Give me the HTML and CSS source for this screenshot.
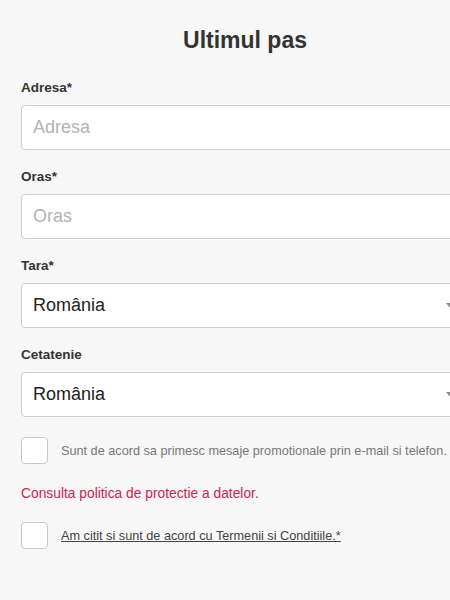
FILE: index.html
```html
<!DOCTYPE html>
<html lang="ro">
<head>
<meta charset="utf-8">
<title>Ultimul pas</title>
<link rel="stylesheet" href="styles.css">
</head>
<body>
<div class="page">
  <form class="form">
    <h1 class="title">Ultimul pas</h1>
    <div class="field">
      <label class="label">Adresa*</label>
      <div class="input"><span class="placeholder">Adresa</span></div>
    </div>
    <div class="field">
      <label class="label">Oras*</label>
      <div class="input"><span class="placeholder">Oras</span></div>
    </div>
    <div class="field">
      <label class="label">Tara*</label>
      <div class="input select"><span class="value">România</span><span class="arrow"></span></div>
    </div>
    <div class="field">
      <label class="label">Cetatenie</label>
      <div class="input select"><span class="value">România</span><span class="arrow"></span></div>
    </div>
    <div class="check-row first">
      <span class="checkbox"></span>
      <span class="check-text">Sunt de acord sa primesc mesaje promotionale prin e-mail si telefon.</span>
    </div>
    <a class="policy">Consulta politica de protectie a datelor.</a>
    <div class="check-row">
      <span class="checkbox"></span>
      <a class="check-text terms">Am citit si sunt de acord cu Termenii si Conditiile.*</a>
    </div>
  </form>
</div>
</body>
</html>
```

FILE: styles.css
```css
html, body {
  margin: 0;
  padding: 0;
  background: #f7f7f7;
  overflow: hidden;
  width: 450px;
  height: 600px;
}
.page {
  font-family: "Liberation Sans", Arial, sans-serif;
  color: #333;
}
.form {
  width: 448px;
  margin-left: 21px;
  padding-top: 26px;
  display: flex;
  flex-direction: column;
}
.title {
  margin: 0 0 26px 0;
  font-size: 23px;
  line-height: 28px;
  font-weight: bold;
  text-align: center;
  color: #333;
}
.field {
  display: flex;
  flex-direction: column;
  margin-bottom: 19px;
}
.label {
  font-size: 13.5px;
  line-height: 16px;
  font-weight: bold;
  color: #333;
  margin-bottom: 9px;
}
.input {
  box-sizing: border-box;
  height: 45px;
  background: #fff;
  border: 1px solid #cdcdcd;
  border-radius: 4px;
  display: flex;
  align-items: center;
  padding: 0 12px 0 11px;
  position: relative;
}
.placeholder {
  font-size: 18px;
  color: #b3b3b3;
}
.value {
  font-size: 18px;
  color: #222;
  flex: 1;
}
.arrow {
  width: 0;
  height: 0;
  border-left: 5px solid transparent;
  border-right: 5px solid transparent;
  border-top: 6px solid #8a8a8a;
}
.check-row {
  display: flex;
  align-items: center;
  gap: 13px;
}
.check-row.first {
  margin-top: 1px;
}
.checkbox {
  box-sizing: border-box;
  width: 27px;
  height: 27px;
  background: #fff;
  border: 1px solid #c8c8c8;
  border-radius: 4px;
  flex: none;
}
.check-text {
  font-size: 12.7px;
  color: #777;
  white-space: nowrap;
}
.terms {
  color: #444;
  text-decoration: underline;
}
.policy {
  font-size: 13.8px;
  line-height: 16px;
  color: #d2234d;
  margin: 22px 0 20px 0;
}
```
